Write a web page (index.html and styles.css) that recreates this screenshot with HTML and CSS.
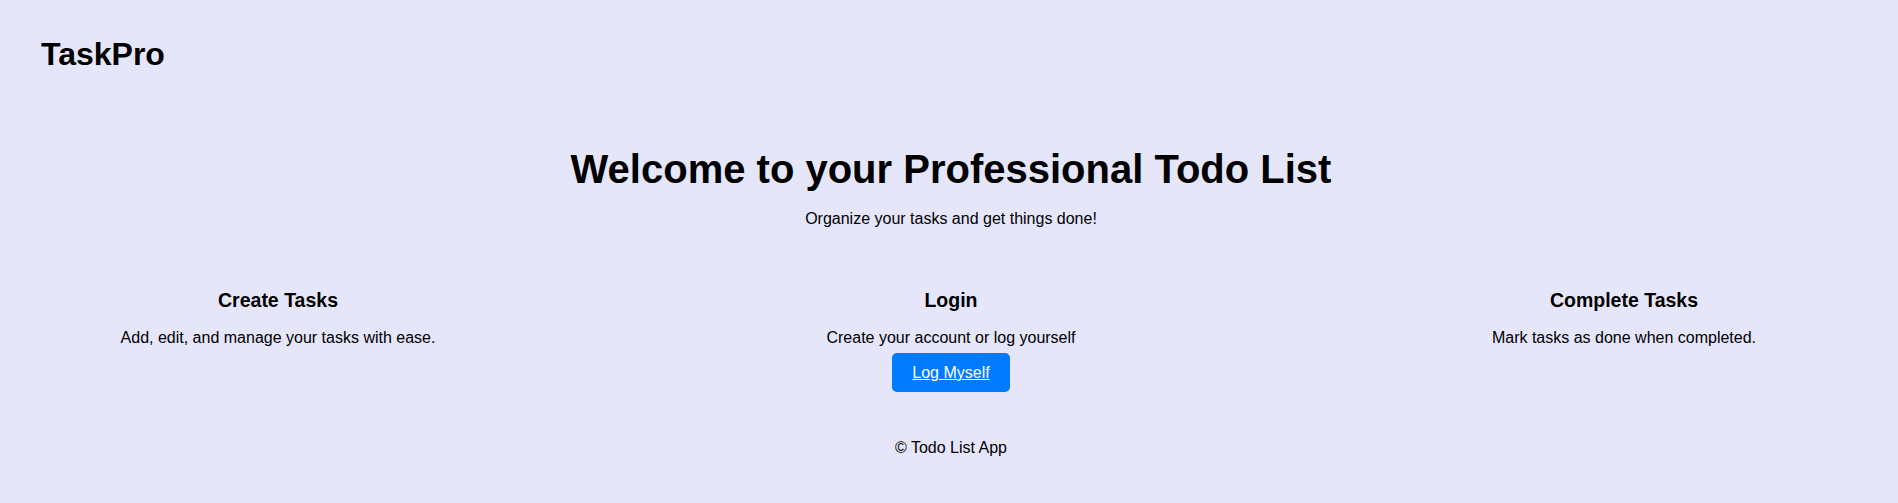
FILE: index.html
```html
<!DOCTYPE html>
<html lang="en">
<head>
<meta charset="utf-8">
<title>TaskPro</title>
<link rel="stylesheet" href="styles.css">
</head>
<body>
<div class="page">
  <header class="site-header">
    <h1 class="logo">TaskPro</h1>
  </header>
  <main>
    <section class="hero">
      <h2 class="hero-title">Welcome to your Professional Todo List</h2>
      <p class="hero-sub">Organize your tasks and get things done!</p>
    </section>
    <section class="features">
      <div class="feature">
        <h3 class="feature-title">Create Tasks</h3>
        <p class="feature-text">Add, edit, and manage your tasks with ease.</p>
      </div>
      <div class="feature">
        <h3 class="feature-title">Login</h3>
        <p class="feature-text">Create your account or log yourself</p>
        <a class="btn" href="#">Log Myself</a>
      </div>
      <div class="feature">
        <h3 class="feature-title">Complete Tasks</h3>
        <p class="feature-text">Mark tasks as done when completed.</p>
      </div>
    </section>
  </main>
  <footer class="site-footer">
    <p class="copy">&copy; Todo List App</p>
  </footer>
</div>
</body>
</html>
```
FILE: styles.css
```css
html, body {
  margin: 0;
  padding: 0;
}
body {
  background: #e6e6fa;
  color: #000;
  font-family: "Liberation Sans", Arial, sans-serif;
  font-size: 16px;
  line-height: normal;
}
.page {
  padding-left: 4px;
  min-height: 503px;
  box-sizing: border-box;
}
.site-header {
  padding: 36px 0 0 37px;
}
.logo {
  margin: 0;
  font-size: 32px;
  font-weight: bold;
}
.hero {
  text-align: center;
  padding-top: 74px;
}
.hero-title {
  margin: 0;
  font-size: 40px;
  font-weight: bold;
}
.hero-sub {
  margin: 18px 0 0;
}
.features {
  display: flex;
  justify-content: space-between;
  padding: 61px 101px 0 101px;
}
.feature {
  width: 346px;
  text-align: center;
  display: flex;
  flex-direction: column;
  align-items: center;
}
.feature-title {
  margin: 0 0 17px;
  font-size: 19.5px;
  font-weight: bold;
}
.feature-text {
  margin: 0;
}
.btn {
  display: inline-block;
  margin-top: 6px;
  padding: 10px 20px;
  line-height: 19px;
  background: #007bff;
  color: #fff;
  border-radius: 5px;
  text-decoration: underline;
}
.site-footer {
  text-align: center;
  padding-top: 47px;
}
.copy {
  margin: 0;
}
```
